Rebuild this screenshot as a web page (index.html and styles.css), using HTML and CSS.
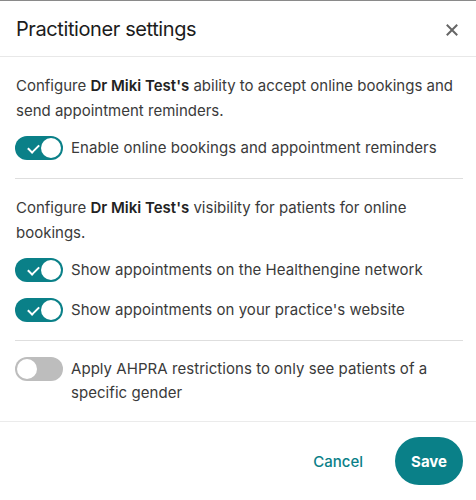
FILE: index.html
```html
<!DOCTYPE html>
<html lang="en">
<head>
    <meta charset="UTF-8">
    <title>Practitioner settings</title>
    <link rel="stylesheet" href="styles.css">
</head>
<body>
    <div class="modal">
        <div class="modal-header">
            <h2 class="modal-title">Practitioner settings</h2>
            <button class="close-btn" aria-label="Close">
                <svg width="12" height="12" viewBox="0 0 12 12">
                    <path d="M1.5 1.5 L10.5 10.5 M10.5 1.5 L1.5 10.5" stroke="#666" stroke-width="2" stroke-linecap="square"/>
                </svg>
            </button>
        </div>

        <div class="modal-body">
            <div class="section">
                <p class="desc">Configure <strong>Dr Miki Test's</strong> ability to accept online bookings and send appointment reminders.</p>
                <label class="toggle-row">
                    <span class="toggle on"><span class="knob"></span></span>
                    <span class="toggle-label">Enable online bookings and appointment reminders</span>
                </label>
            </div>

            <div class="section">
                <p class="desc">Configure <strong>Dr Miki Test's</strong> visibility for patients for online bookings.</p>
                <label class="toggle-row">
                    <span class="toggle on"><span class="knob"></span></span>
                    <span class="toggle-label">Show appointments on the Healthengine network</span>
                </label>
                <label class="toggle-row">
                    <span class="toggle on"><span class="knob"></span></span>
                    <span class="toggle-label">Show appointments on your practice's website</span>
                </label>
            </div>

            <div class="section">
                <label class="toggle-row">
                    <span class="toggle"><span class="knob"></span></span>
                    <span class="toggle-label">Apply AHPRA restrictions to only see patients of a specific gender</span>
                </label>
            </div>
        </div>

        <div class="modal-footer">
            <button class="btn-link">Cancel</button>
            <button class="btn-primary">Save</button>
        </div>
    </div>
</body>
</html>
```

FILE: styles.css
```css
* {
    box-sizing: border-box;
    margin: 0;
    padding: 0;
}

body {
    font-family: Inter, "Noto Sans", sans-serif;
    color: #3a3a3a;
    background: #fff;
}

.modal {
    width: 476px;
    height: 500px;
    border-top: 1px solid #8a8a8a;
    display: flex;
    flex-direction: column;
}

.modal-header {
    height: 57px;
    padding: 0 16px;
    display: flex;
    align-items: center;
    justify-content: space-between;
    border-bottom: 1px solid #e8e8e8;
}

.modal-title {
    font-size: 20px;
    font-weight: 400;
    color: #1c1c1c;
    letter-spacing: -0.4px;
}

.close-btn {
    background: none;
    border: none;
    width: 24px;
    height: 24px;
    display: flex;
    align-items: center;
    justify-content: center;
    margin-right: -4px;
    margin-top: 2px;
    cursor: pointer;
}

.modal-body {
    flex: 1;
    padding: 0 13px 0 15px;
}

.section {
    padding: 16px 0 18px;
    border-bottom: 1px solid #dedede;
    display: flex;
    flex-direction: column;
}

.section:last-child {
    border-bottom: none;
    padding-bottom: 16px;
}

.desc {
    font-size: 15px;
    line-height: 25px;
    padding-left: 1px;
}

.desc strong {
    font-weight: 600;
    color: #222;
}

.desc + .toggle-row {
    margin-top: 13px;
}

.toggle-row + .toggle-row {
    margin-top: 16px;
}

.toggle-row {
    display: flex;
    align-items: flex-start;
    gap: 8px;
    cursor: pointer;
}

.toggle {
    flex-shrink: 0;
    position: relative;
    width: 48px;
    height: 24px;
    border-radius: 12px;
    background: #bdbdbd;
}

.toggle .knob {
    position: absolute;
    top: 2px;
    left: 2px;
    width: 20px;
    height: 20px;
    border-radius: 50%;
    background: #fff;
}

.toggle.on {
    background: #0a8088;
}

.toggle.on .knob {
    left: 26px;
}

.toggle.on::before {
    content: "";
    position: absolute;
    left: 13px;
    top: 8px;
    width: 9px;
    height: 5px;
    border-left: 2px solid #fff;
    border-bottom: 2px solid #fff;
    transform: rotate(-45deg);
}

.toggle-label {
    font-size: 15px;
    line-height: 24px;
    letter-spacing: 0.05px;
}

.modal-footer {
    height: 80px;
    border-top: 1px solid #ebebeb;
    padding: 0 13px 0 16px;
    display: flex;
    align-items: center;
    justify-content: flex-end;
    gap: 32px;
}

.btn-link {
    background: none;
    border: none;
    font-family: Inter, "Noto Sans", sans-serif;
    font-size: 15px;
    font-weight: 500;
    color: #0a8088;
    cursor: pointer;
}

.btn-primary {
    height: 48px;
    padding: 0 16px;
    border-radius: 24px;
    border: none;
    background: #0a8088;
    color: #fff;
    font-family: Inter, "Noto Sans", sans-serif;
    font-size: 15px;
    font-weight: 700;
    cursor: pointer;
}
```
